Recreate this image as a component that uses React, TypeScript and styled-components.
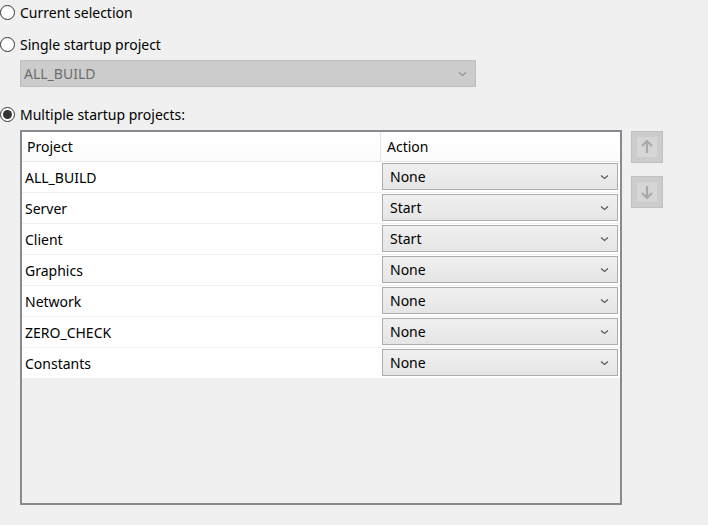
import * as React from 'react';
import styled, { createGlobalStyle } from "styled-components";

type Project = { name: string, action: string };

const projects: Array<Project> = [
    { name: "ALL_BUILD", action: "None" },
    { name: "Server", action: "Start" },
    { name: "Client", action: "Start" },
    { name: "Graphics", action: "None" },
    { name: "Network", action: "None" },
    { name: "ZERO_CHECK", action: "None" },
    { name: "Constants", action: "None" },
];

const GlobalStyle = createGlobalStyle`
    html, body {
        margin: 0;
        background: #f0f0f0;
    }
    body {
        font-family: "Noto Sans", "Open Sans", sans-serif;
        font-size: 14px;
        color: #000;
    }
`;

const Page = styled.div`
    display: flex;
    flex-direction: column;
    width: 708px;
    height: 525px;
`;

const RadioRow = styled.label<{ $top: number }>`
    display: flex;
    align-items: center;
    gap: 5px;
    height: 24px;
    margin-top: ${(p) => p.$top}px;
`;

const RadioCircle = styled.span<{ $checked?: boolean }>`
    box-sizing: border-box;
    width: 15px;
    height: 15px;
    border-radius: 50%;
    border: 1px solid #333;
    background: #fff;
    display: flex;
    align-items: center;
    justify-content: center;
    &::after {
        content: "";
        display: ${(p) => (p.$checked ? "block" : "none")};
        width: 9px;
        height: 9px;
        border-radius: 50%;
        background: #333;
    }
`;

const DisabledCombo = styled.div`
    box-sizing: border-box;
    margin: 4px 0 0 20px;
    width: 456px;
    height: 27px;
    background: #cccccc;
    border: 1px solid #bfbfbf;
    color: #6d6d6d;
    display: flex;
    align-items: center;
    justify-content: space-between;
    padding: 0 8px 0 3px;
`;

const TableArea = styled.div`
    display: flex;
    align-items: flex-start;
    margin: 4px 0 0 20px;
`;

const ListView = styled.div`
    box-sizing: border-box;
    width: 602px;
    height: 375px;
    border: 2px solid #878a8f;
    background: #f0f0f0;
    display: flex;
    flex-direction: column;
`;

const HeaderRow = styled.div`
    display: grid;
    grid-template-columns: 358px 1fr;
    height: 29px;
    background: linear-gradient(#ffffff, #fcfcfc);
    border-bottom: 1px solid #e5e5e5;
`;

const HeaderCell = styled.div<{ $divider?: boolean }>`
    display: flex;
    align-items: center;
    padding-left: ${(p) => (p.$divider ? 6 : 5)}px;
    border-left: ${(p) => (p.$divider ? "1px solid #e5e5e5" : "none")};
`;

const Row = styled.div`
    display: grid;
    grid-template-columns: 359px 1fr;
    height: 31px;
    box-sizing: border-box;
    background: #fff;
    border-bottom: 1px solid #f0f0f0;
`;

const NameCell = styled.div`
    display: flex;
    align-items: center;
    padding-left: 3px;
`;

const ActionCell = styled.div`
    display: flex;
    align-items: flex-start;
    padding: 1px 2px 0 1px;
`;

const Combo = styled.div`
    box-sizing: border-box;
    width: 100%;
    height: 27px;
    border: 1px solid #adadad;
    background: linear-gradient(#f0f0f0, #e5e5e5);
    display: flex;
    align-items: center;
    justify-content: space-between;
    padding: 0 8px 0 7px;
`;

const SideButtons = styled.div`
    display: flex;
    flex-direction: column;
    gap: 13px;
    margin-left: 9px;
    margin-top: 1px;
`;

const MoveButton = styled.div`
    box-sizing: border-box;
    width: 32px;
    height: 32px;
    background: #cccccc;
    border: 1px solid #bfbfbf;
    display: flex;
    align-items: center;
    justify-content: center;
`;

const Chevron: React.FC<{ color: string }> = ({ color }) => (
    <svg width="9" height="6" viewBox="0 0 9 6">
        <path d="M1 1.5 L4.5 4.5 L8 1.5" fill="none" stroke={color} strokeWidth="1.1"/>
    </svg>
);

const Arrow: React.FC<{ down?: boolean }> = ({ down }) => (
    <svg width="20" height="20" viewBox="0 0 20 20" style={down ? { transform: "rotate(180deg)" } : undefined}>
        <rect width="20" height="20" fill="#d6d6d6"/>
        <path d="M10 4 L10 16 M5 9 L10 4 L15 9" fill="none" stroke="#a9a9a9" strokeWidth="2.2"/>
    </svg>
);

const App: React.FC = () => {
    return (
        <Page>
            <GlobalStyle/>
            <RadioRow $top={0}>
                <RadioCircle/>
                Current selection
            </RadioRow>
            <RadioRow $top={8}>
                <RadioCircle/>
                Single startup project
            </RadioRow>
            <DisabledCombo>
                <span>ALL_BUILD</span>
                <Chevron color="#8f8f8f"/>
            </DisabledCombo>
            <RadioRow $top={15}>
                <RadioCircle $checked/>
                Multiple startup projects:
            </RadioRow>
            <TableArea>
                <ListView>
                    <HeaderRow>
                        <HeaderCell>Project</HeaderCell>
                        <HeaderCell $divider>Action</HeaderCell>
                    </HeaderRow>
                    {projects.map((p) => (
                        <Row key={p.name}>
                            <NameCell>{p.name}</NameCell>
                            <ActionCell>
                                <Combo>
                                    <span>{p.action}</span>
                                    <Chevron color="#555"/>
                                </Combo>
                            </ActionCell>
                        </Row>
                    ))}
                </ListView>
                <SideButtons>
                    <MoveButton><Arrow/></MoveButton>
                    <MoveButton><Arrow down/></MoveButton>
                </SideButtons>
            </TableArea>
        </Page>
    );
}

export default App;
